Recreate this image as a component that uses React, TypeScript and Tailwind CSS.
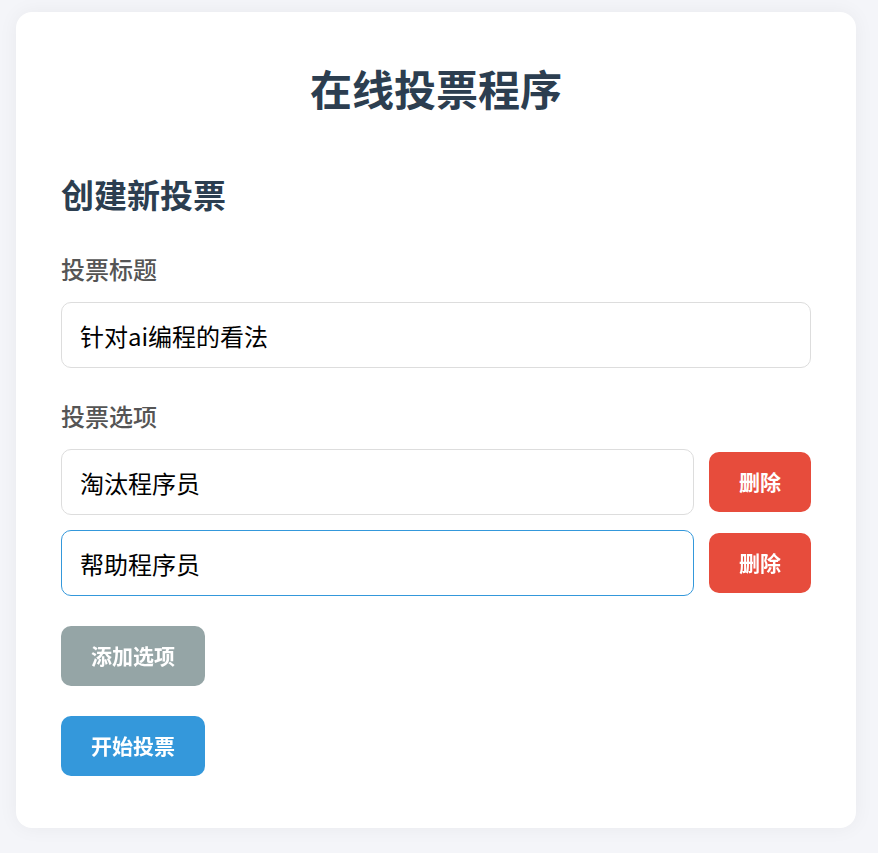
import { useEffect, useRef, useState } from "react";

const App = () => {
    const [title, setTitle] = useState("针对ai编程的看法");
    const [options, setOptions] = useState<string[]>(["淘汰程序员", "帮助程序员"]);
    const lastRef = useRef<HTMLInputElement>(null);

    useEffect(() => {
        const el = lastRef.current;
        if (el) {
            el.focus();
            el.setSelectionRange(el.value.length, el.value.length);
        }
    }, []);

    const updateOption = (i: number, v: string) => {
        setOptions((prev) => prev.map((o, idx) => (idx === i ? v : o)));
    };

    const removeOption = (i: number) => {
        setOptions((prev) => prev.filter((_, idx) => idx !== i));
    };

    return (
        <div
            className="min-h-[853px] bg-[#f4f5f9] pt-3 pl-4"
            style={{ fontFamily: '"Noto Sans CJK SC", "Noto Sans", sans-serif' }}
        >
            <div className="w-[840px] rounded-2xl bg-white px-[45px] pt-[45px] pb-[52px] shadow-[0_0_20px_rgba(0,0,0,0.05)]">
                <h1 className="text-center text-[42px] leading-[62px] font-bold text-[#2c3e50]">
                    在线投票程序
                </h1>

                <h2 className="mt-[55px] text-[33px] leading-[40px] font-bold text-[#2c3e50]">
                    创建新投票
                </h2>

                <label className="mt-10 block text-[24px] leading-[30px] font-medium text-[#555]">
                    投票标题
                </label>
                <input
                    type="text"
                    value={title}
                    onChange={(e) => setTitle(e.target.value)}
                    className="mt-[18px] block h-[66px] w-full rounded-[10px] border border-[#ddd] px-[18px] text-[24px] text-black outline-none"
                />

                <label className="mt-[33px] block text-[24px] leading-[30px] font-medium text-[#555]">
                    投票选项
                </label>
                <div className="mt-[18px] flex flex-col gap-[15px]">
                    {options.map((opt, i) => (
                        <div key={i} className="flex items-center gap-[15px]">
                            <input
                                ref={i === options.length - 1 ? lastRef : undefined}
                                type="text"
                                value={opt}
                                onChange={(e) => updateOption(i, e.target.value)}
                                className={`block h-[66px] flex-1 rounded-[10px] border px-[18px] text-[24px] text-black outline-none ${
                                    i === options.length - 1
                                        ? "border-[#3498db]"
                                        : "border-[#ddd]"
                                }`}
                            />
                            <button
                                onClick={() => removeOption(i)}
                                className="h-[60px] w-[102px] rounded-[10px] bg-[#e74c3c] text-[21px] font-bold text-white"
                            >
                                删除
                            </button>
                        </div>
                    ))}
                </div>

                <button
                    onClick={() => setOptions((prev) => [...prev, ""])}
                    className="mt-[30px] block h-[60px] w-[144px] rounded-[10px] bg-[#95a5a6] text-[21px] font-bold text-white"
                >
                    添加选项
                </button>
                <button className="mt-[30px] block h-[60px] w-[144px] rounded-[10px] bg-[#3498db] text-[21px] font-bold text-white">
                    开始投票
                </button>
            </div>
        </div>
    );
};

export default App;
